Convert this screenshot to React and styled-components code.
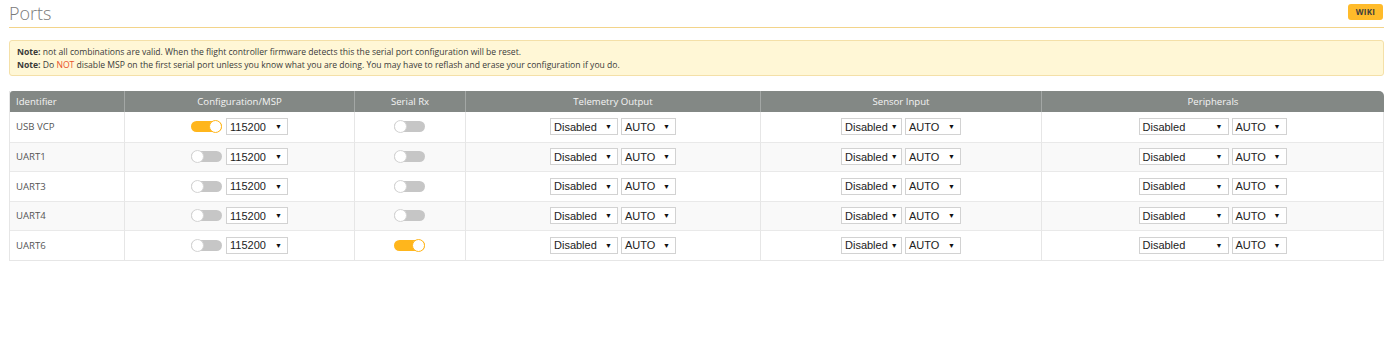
import React from 'react';
import styled, { createGlobalStyle } from 'styled-components';

const GlobalStyle = createGlobalStyle`
  body {
    margin: 0;
    background: #ffffff;
    font-family: 'Open Sans', 'Noto Sans', sans-serif;
  }
`;

const Page = styled.div`
  padding: 0 4px 0 9px;
  width: 1375px;
`;

const TitleBar = styled.div`
  display: flex;
  justify-content: space-between;
  align-items: flex-start;
  height: 28px;
  border-bottom: 1px solid #f3d48a;
  box-sizing: border-box;
`;

const Title = styled.h1`
  margin: 0;
  padding-top: 1px;
  font-size: 18px;
  line-height: 24px;
  font-weight: 300;
  color: #7a7a7a;
`;

const WikiButton = styled.a`
  margin-top: 4px;
  margin-right: 1px;
  padding: 0 8px;
  height: 16px;
  line-height: 16px;
  border-radius: 3px;
  background: #ffbb2a;
  color: #3c3c3c;
  font-size: 8px;
  font-weight: 700;
  letter-spacing: 0.2px;
`;

const Note = styled.div`
  margin-top: 12px;
  padding: 5px 7px 4px;
  background: #fff7d6;
  border: 1px solid #f4e0a8;
  border-radius: 3px;
  font-size: 8.6px;
  line-height: 12.5px;
  color: #3a3a3a;
`;

const Bold = styled.b`
  font-weight: 700;
`;

const Red = styled.span`
  color: #e8502a;
`;

const Grid = styled.div`
  margin-top: 15px;
  display: grid;
  grid-template-columns: 114px 230px 111px 295px 281px 1fr;
  border-left: 1px solid #e6e6e6;
  border-bottom: 1px solid #e6e6e6;
`;

const Head = styled.div`
  height: 21px;
  background: #838885;
  color: #f4f4f4;
  font-size: 9.6px;
  display: flex;
  align-items: center;
  justify-content: ${p => (p.left ? 'flex-start' : 'center')};
  padding-left: ${p => (p.left ? '6px' : '0')};
  border-left: ${p => (p.first ? 'none' : '1px solid #a3a7a5')};
  border-top-left-radius: ${p => (p.first ? '3px' : '0')};
  border-top-right-radius: ${p => (p.last ? '5px' : '0')};
`;

const Cell = styled.div`
  height: 29.5px;
  box-sizing: border-box;
  background: ${p => (p.alt ? '#f9f9f9' : '#ffffff')};
  border-top: ${p => (p.top ? 'none' : '1px solid #e9e9e9')};
  border-left: ${p => (p.first ? 'none' : '1px solid #e6e6e6')};
  border-right: ${p => (p.last ? '1px solid #e6e6e6' : 'none')};
  display: flex;
  align-items: center;
  justify-content: ${p => (p.left ? 'flex-start' : 'center')};
  gap: 3px;
  padding-left: ${p => (p.left ? '6px' : '0')};
  font-size: 9.6px;
  color: #555555;
`;

const Toggle = styled.span`
  position: relative;
  display: inline-block;
  width: 31px;
  height: 11px;
  border-radius: 6px;
  margin-right: 1px;
  background: ${p => (p.on ? '#ffb61c' : '#c6c6c6')};

  &::after {
    content: '';
    position: absolute;
    top: -1px;
    left: ${p => (p.on ? '18px' : '0')};
    width: 11px;
    height: 11px;
    border-radius: 50%;
    background: #ffffff;
    border: 1px solid ${p => (p.on ? '#ffb61c' : '#d4d4d4')};
    box-sizing: content-box;
  }
`;

const Select = styled.span`
  display: inline-flex;
  align-items: center;
  justify-content: space-between;
  box-sizing: border-box;
  width: ${p => p.w}px;
  height: 17px;
  padding: 0 5px 0 3px;
  background: #ffffff;
  border: 1px solid #d2d2d2;
  font-family: 'Liberation Sans', Arial, sans-serif;
  font-size: 11px;
  color: #222222;
`;

const Arrow = styled.span`
  margin-left: 3px;
  font-size: 7px;
  color: #111111;
`;

const Dropdown = ({ w, value }) => (
  <Select w={w}>
    {value}
    <Arrow>▼</Arrow>
  </Select>
);

const ports = [
  { id: 'USB VCP', msp: true, rx: false },
  { id: 'UART1', msp: false, rx: false },
  { id: 'UART3', msp: false, rx: false },
  { id: 'UART4', msp: false, rx: false },
  { id: 'UART6', msp: false, rx: true },
];

const headers = ['Identifier', 'Configuration/MSP', 'Serial Rx', 'Telemetry Output', 'Sensor Input', 'Peripherals'];

export default function App() {
  return (
    <Page>
      <GlobalStyle />
      <TitleBar>
        <Title>Ports</Title>
        <WikiButton>WIKI</WikiButton>
      </TitleBar>
      <Note>
        <div>
          <Bold>Note:</Bold> not all combinations are valid. When the flight controller firmware detects this the serial port configuration will be reset.
        </div>
        <div>
          <Bold>Note:</Bold> Do <Red>NOT</Red> disable MSP on the first serial port unless you know what you are doing. You may have to reflash and erase your configuration if you do.
        </div>
      </Note>
      <Grid>
        {headers.map((h, i) => (
          <Head key={h} left={i === 0} first={i === 0} last={i === headers.length - 1}>
            {h}
          </Head>
        ))}
        {ports.map((p, r) => {
          const alt = r % 2 === 1;
          const top = r === 0;
          return (
            <React.Fragment key={p.id}>
              <Cell left first alt={alt} top={top}>{p.id}</Cell>
              <Cell alt={alt} top={top}>
                <Toggle on={p.msp} />
                <Dropdown w={62} value="115200" />
              </Cell>
              <Cell alt={alt} top={top}>
                <Toggle on={p.rx} />
              </Cell>
              <Cell alt={alt} top={top}>
                <Dropdown w={68} value="Disabled" />
                <Dropdown w={55} value="AUTO" />
              </Cell>
              <Cell alt={alt} top={top}>
                <Dropdown w={61} value="Disabled" />
                <Dropdown w={56} value="AUTO" />
              </Cell>
              <Cell alt={alt} top={top} last>
                <Dropdown w={90} value="Disabled" />
                <Dropdown w={55} value="AUTO" />
              </Cell>
            </React.Fragment>
          );
        })}
      </Grid>
    </Page>
  );
}
